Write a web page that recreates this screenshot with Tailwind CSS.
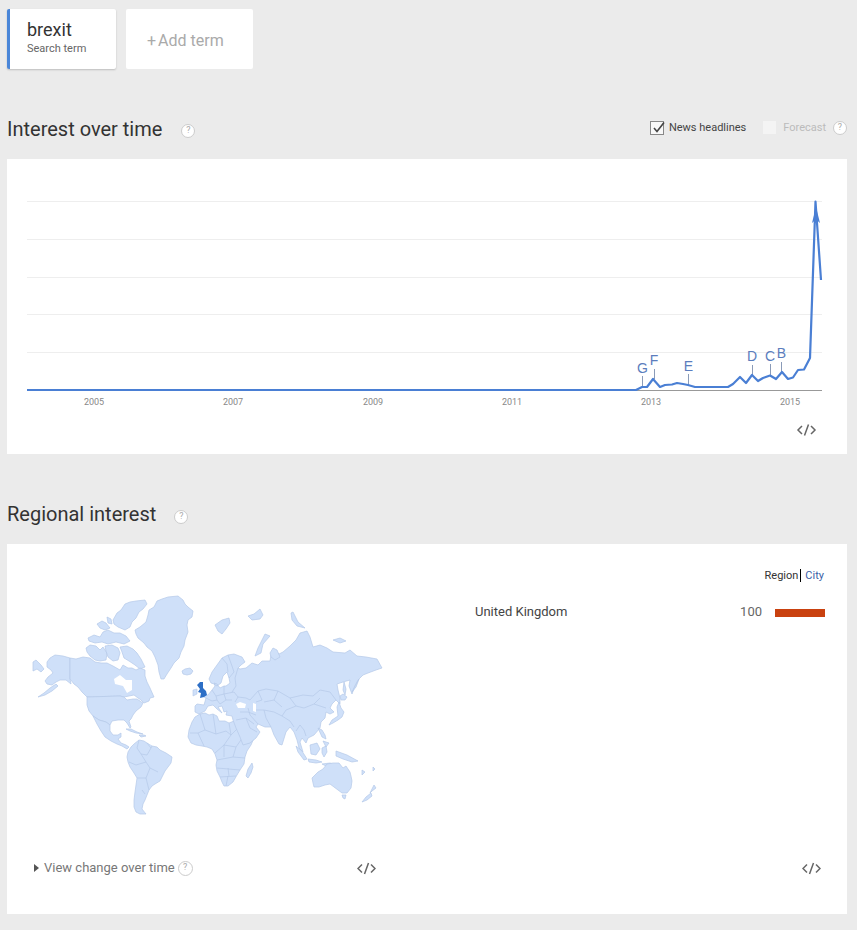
<!DOCTYPE html>
<html><head><meta charset="utf-8"><script src="https://cdn.jsdelivr.net/npm/@tailwindcss/browser@4"></script></head>
<body class="bg-[#ebebeb] font-['Roboto',sans-serif] text-[#333] w-[857px] h-[930px] overflow-hidden">
<div class="px-[7px] pt-[9px] flex gap-[10px]">
  <div class="w-[109px] h-[60px] bg-white rounded-[2px] border-l-[3px] border-[#4a86d8] shadow-[0_1px_2px_rgba(0,0,0,0.2)] pl-[17px] pt-[10px]">
    <div class="text-[18px] leading-[21px] text-[#333]">brexit</div>
    <div class="text-[11px] leading-[15px] text-[#666] mt-[1px]">Search term</div>
  </div>
  <div class="w-[127px] h-[60px] bg-white rounded-[2px] flex items-center pl-[21px] pt-[3px] text-[16px] text-[#aaa]">+<span class="ml-[2px]">Add term</span></div>
</div>
<div class="h-[90px] pl-[7px] pr-[10px] flex items-end pb-[18px] justify-between relative">
  <div class="flex items-center">
    <span class="text-[20px] leading-[24px] text-[#333]">Interest over time</span>
    <span class="ml-[19px] mt-[4px] w-[14px] h-[14px] rounded-full border border-[#ccc] bg-white text-[#aaa] text-[9px] flex items-center justify-center">?</span>
  </div>
  <div class="flex items-center mb-[5px] text-[11px]">
    <span class="w-[14px] h-[14px] border border-[#888] bg-[#f8f8f8] relative"><svg class="absolute left-0 -top-[2px]" width="15" height="15" viewBox="0 0 15 15"><path d="M3 8l3 3.500l7-9" fill="none" stroke="#444" stroke-width="1.600"/></svg></span>
    <span class="ml-[5px] text-[#444]">News headlines</span>
    <span class="ml-[17px] w-[13px] h-[13px] bg-[#f4f4f4]"></span>
    <span class="ml-[7px] text-[#bbb]">Forecast</span>
    <span class="ml-[7px] w-[14px] h-[14px] rounded-full border border-[#ccc] bg-white text-[#aaa] text-[9px] flex items-center justify-center">?</span>
  </div>
</div>
<section class="ml-[7px] w-[840px] h-[295px] bg-white">
  <svg width="840" height="295" viewBox="7 159 840 295" class="block">
    <g stroke="#eeeeee" stroke-width="1">
      <path d="M27 201.500H822M27 239.500H822M27 277.500H822M27 314.500H822M27 352.500H822"/>
    </g>
    <path d="M27 390.500H822" stroke="#999" stroke-width="1"/>
    <g stroke="#8a9bb8" stroke-width="1" fill="none">
      <path d="M642.500 376V387M654.500 369V379M688.500 374V385M752.500 365V375M770.500 364V375M781.500 362V372"/>
    </g>
    <path d="M27 390H636L642 387H647L653 379L660 387L665 385L672 384.500L677 383L683 384L688 385L695 387H728L733 384L740 377L746 383L752 375L758 381L763 378L770 375.500L776 379L782 372L788 379L793 377.500L798 370L804 369.500L810 358L815.500 201.500L821 280" fill="none" stroke="#4a7fd4" stroke-width="2.200" stroke-linejoin="round"/>
    <path d="M816 207L812 223L816 219.500L820 223Z" fill="#4a7fd4"/>
    <g font-family="'Liberation Sans',sans-serif" font-size="14" fill="#5b7dbd" text-anchor="middle">
      <text x="642.500" y="373">G</text><text x="654" y="365">F</text><text x="688.500" y="371">E</text><text x="752" y="361">D</text><text x="770" y="361">C</text><text x="781.500" y="358">B</text>
    </g>
    <g font-family="Roboto,sans-serif" font-size="9" fill="#888" text-anchor="middle">
      <text x="94" y="405">2005</text><text x="233" y="405">2007</text><text x="373" y="405">2009</text><text x="512" y="405">2011</text><text x="651" y="405">2013</text><text x="790" y="405">2015</text>
    </g>
    <path d="M802 426l-4 4l4 4M811 426l4 4l-4 4M808.500 424.500l-4 11" fill="none" stroke="#666" stroke-width="1.500"/>
  </svg>
</section>
<div class="h-[90px] px-[7px] flex items-end pb-[18px]">
  <span class="text-[20px] leading-[24px] text-[#333]">Regional interest</span>
  <span class="ml-[18px] mb-[2px] w-[14px] h-[14px] rounded-full border border-[#ccc] bg-white text-[#aaa] text-[9px] flex items-center justify-center">?</span>
</div>
<section class="ml-[7px] w-[840px] h-[370px] bg-white flex">
  <div class="w-[384px] flex flex-col shrink-0">
    <svg width="384" height="250" viewBox="7 590 384 250" class="block mt-[46px] blur-[0.3px]">
      <g fill="#cfe0f9" stroke="#b4c8e8" stroke-width="0.700" stroke-linejoin="round">
        <!-- Greenland -->
        <path d="M135 630L140 627L146 622L148 615L149 610L154 607L157 601L162 599L168 597L178 596L183 600L185 604L188 607L193 611L192 617L188 620L187 625L188 632L185 640L184 646L181 652L179 658L174 663L171 668L167 674L164 679L161 679L159 672L158 665L155 657L152 651L147 647L144 643L138 638L136 634Z"/>
        <!-- Arctic archipelago -->
        <path d="M113 620L117 613L121 610L125 604L130 602L136 601L145 600L147 604L143 609L139 612L136 618L132 622L130 627L125 630L118 627L114 624Z"/>
        <path d="M88 638L94 635L100 637L103 632L108 630L114 633L120 633L126 636L130 641L124 644L116 642L108 644L102 642L95 643L89 641Z"/>
        <path d="M97 624L102 621L106 623L110 628L105 630L100 628Z"/>
        <path d="M107 617L111 619L112 624L108 623Z"/>
        <path d="M86 648L90 645L96 646L100 650L103 647L107 653L106 660L100 661L95 660L90 656L87 652Z"/>
        <path d="M105 646L112 645L118 648L120 653L118 660L113 661L108 657L106 651Z"/>
        <path d="M120 647L127 646L133 649L137 653L141 659L145 667L140 669L135 665L129 661L124 658L122 652Z"/>
        <!-- Iceland -->
        <path d="M182 671L185 669L190 668L193 671L191 674L187 675L183 674Z"/>
        <!-- Alaska -->
        <path d="M70 658L63 656L55 655L50 658L47 662L47 667L51 670L53 673L48 677L45 681L47 684L52 685L56 682L60 680L66 680L71 684L70 679Z"/>
        <path d="M33 662L36 660L41 665L44 669L41 672L37 669L33 671Z"/>
        <path d="M56 684L50 688L44 693L38 697L45 695L52 691L58 686Z"/>
        <!-- Canada -->
        <path d="M70 658L76 659L83 657L90 658L95 662L101 663L107 663L113 666L120 670L123 665L128 668L132 668L136 670L140 668L145 670L145 676L147 682L150 688L154 697L150 698L149 701L144 703L141 700L138 698L134 695L129 696L124 697L120 696L87 697L82 692L78 687L74 684L70 679Z"/>
        <!-- USA -->
        <path d="M87 697L120 696L124 697L127 700L133 699L137 699L143 703L141 707L136 711L133 715L131 719L129 721L131 727L130 728L127 723L124 720L118 720L112 721L110 725L106 722L99 720L93 716L89 711L87 705Z"/>
        <!-- Mexico + central america -->
        <path d="M93 716L99 720L106 722L110 725L110 731L113 735L118 735L121 733L121 737L118 739L121 743L126 745L129 747L127 749L122 746L117 744L111 741L105 737L101 731L97 724Z"/>
        <path d="M126 729L131 729L137 732L143 734L136 733L130 731Z"/>
        <path d="M139 735L144 735L146 736L141 737Z"/>
        <!-- South America -->
        <path d="M128 752L131 747L134 744L139 740L144 741L147 743L152 746L157 747L160 750L166 753L172 757L171 763L168 767L165 771L162 777L160 781L155 784L152 786L149 790L147 795L145 800L143 804L142 809L146 814L140 814L136 812L134 807L134 800L135 792L136 785L137 778L134 773L130 767L128 762L127 757Z"/>
        <path d="M139 740L137 748L141 754L147 755L151 748M147 743L151 748L152 746M141 754L146 762L150 768L158 772M129 762L136 765L146 762M137 778L146 778L149 790M146 778L150 768M142 790L145 794"/>
        <!-- Africa -->
        <path d="M192 722L195 717L200 714L205 713L209 715L213 714L217 716L219 721L225 721L229 723L234 721L236 724L240 731L243 737L249 738L254 738L251 745L247 751L245 757L244 764L240 770L237 775L233 782L228 786L224 786L222 782L220 777L217 771L216 765L217 760L215 754L212 749L207 747L202 746L196 745L191 743L188 737L189 730Z"/>
        <path d="M200 714L205 730L198 733L190 733M198 733L204 746M213 714L216 734L205 730M216 734L226 731L231 735L229 723M231 735L237 729M231 735L224 745L215 753M224 745L236 747L243 737M236 747L233 757L217 760M233 757L245 758M224 745L224 757M217 768L240 770M220 777L236 776M226 786L228 776M228 768L229 776"/>
        <path d="M246 776L248 769L252 763L253 767L251 773L248 778Z"/>
        <!-- Eurasia -->
        <path d="M195 712L195 706L197 704L204 705L206 698L202 696L208 695L212 690L215 686L214 683L217 684L220 688L224 686L226 686L230 683L229 678L227 672L223 676L221 683L217 686L214 684L211 683L209 679L212 672L217 665L222 658L228 655L234 654L242 657L245 662L241 665L238 668L240 669L246 668L252 663L258 665L262 661L270 661L271 655L273 651L279 654L283 652L290 646L296 640L300 633L307 631L310 637L313 647L320 645L327 648L333 652L345 653L350 650L357 656L366 657L377 659L382 668L376 670L368 673L363 675L358 680L355 686L352 694L349 686L350 680L343 682L337 684L338 690L340 698L340 704L336 700L332 704L330 708L334 712L330 714L326 712L325 718L321 722L320 728L314 735L308 738L306 743L302 738L300 742L303 752L299 748L297 740L294 732L290 727L286 732L282 745L279 744L274 735L271 727L265 727L258 724L256 727L260 732L256 738L250 743L243 745L240 737L236 728L233 720L232 716L226 715L227 711L224 712L222 706L218 707L222 713L217 709L213 705L208 706L205 711L199 714Z"/>
        <!-- borders -->
        <path fill="none" d="M206 698L212 701L217 700L220 704M212 690L216 696L217 700M216 696L224 694L226 700L220 704M224 686L224 694L234 692L238 697L235 702M226 700L232 700M232 692L236 686L235 678L238 668M222 658L227 664L228 672M228 655L232 666L234 672L229 678M238 697L246 698L250 700L258 691L266 689L278 691L290 698L303 695L313 696L320 690L330 692L336 700M290 698L296 706L304 708L314 704L320 698M314 704L326 708M296 706L286 710L282 716L274 712L264 710L256 710M264 710L266 718L271 727M282 716L290 721L294 727M248 708L250 715L258 724M240 712L248 712L256 715M236 720L246 718L254 724M246 718L250 728L257 732M300 725L304 730L306 736M300 725L296 731M258 691L262 700L256 702M278 691L274 700L264 702M274 700L282 707"/>
        <!-- Japan & NE islands -->
        <path d="M337 707L339 702L341 708L344 712L342 717L338 720L333 723L329 725L332 720L338 716Z"/>
        <path d="M340 696L343 694L347 697L345 700L341 700Z"/>
        <path d="M344 682L346 689L345 695L343 690Z"/>
        <path d="M359 679L356 687L352 692L355 686Z"/>
        <!-- Indonesia -->
        <path d="M296 746L302 751L307 759L304 760L298 752Z"/>
        <path d="M308 759L316 760L322 762L316 763L309 762Z"/>
        <path d="M310 745L317 743L320 749L316 755L311 754Z"/>
        <path d="M322 748L326 746L327 752L324 757L322 753Z"/>
        <path d="M336 751L347 755L358 761L352 762L343 759L336 756Z"/>
        <path d="M322 764L330 763L335 765L326 766Z"/>
        <path d="M318 728L322 730L325 735L326 739L322 737Z"/><path d="M323 741L329 743L326 747Z"/>
        <!-- Australia -->
        <path d="M312 778L318 772L323 769L327 764L333 763L339 763L343 768L346 766L350 772L351 776L352 781L351 788L347 793L342 793L338 790L334 787L330 784L325 785L319 787L314 787L313 783Z"/>
        <path d="M342 795L346 795L345 799L343 798Z"/>
        <!-- NZ -->
        <path d="M374 785L376 788L372 791L370 793Z"/><path d="M371 793L366 797L362 802L367 800L372 796Z"/>
        <path d="M362 770L365 772L362 775Z"/><path d="M373 767L375 769L373 771Z"/>
        <!-- Arctic Eurasia -->
        <path d="M215 625L222 620L229 618L230 623L226 629L222 634L218 631Z"/>
        <path d="M248 616L254 614L260 609L263 615L260 619L252 620Z"/>
        <path d="M291 613L293 612L298 622L305 628L297 626L292 620Z"/>
        <path d="M255 656L258 648L265 634L270 636L263 644L261 653Z"/>
        <path d="M270 653L273 648L277 650L280 657L275 660L271 657Z"/>
        <path d="M333 640L340 638L346 641L340 643Z"/>
      </g>
      <!-- Hudson bay, seas -->
      <path d="M114 679L120 675L126 680L132 680L132 690L127 693L123 686L115 684Z" fill="#fff"/>
      <path d="M236 704L240 702L246 704L245 708L238 708Z" fill="#fff"/>
      <path d="M253 703L256 704L256 712L253 711Z" fill="#fff"/>
      <path d="M193 690L197 689L197 694L193 696Z" fill="#cfe0f9" stroke="#b4c8e8" stroke-width="0.600"/>
      <path d="M197 685L200 682L203 682L203 688L206 691L207 695L204 697L200 698L201 693L198 692L200 689Z" fill="#2d6fc6"/>
    </svg>
    <div class="h-[36px] mt-[10px] flex items-center text-[12px] text-[#777] pl-[27px] relative">
      <svg width="5" height="8" viewBox="0 0 5 8"><path d="M0 0L5 4L0 8Z" fill="#555"/></svg>
      <span class="ml-[5px] text-[13px]">View change over time</span>
      <span class="ml-[3px] w-[15px] h-[15px] rounded-full border border-[#ccc] bg-white text-[#aaa] text-[9px] flex items-center justify-center">?</span>
      <svg class="ml-[164px]" width="19" height="13" viewBox="0 0 19 13"><path d="M5 2.500l-4 4l4 4M14 2.500l4 4l-4 4M11.500 1l-4 11" fill="none" stroke="#666" stroke-width="1.500"/></svg>
    </div>
  </div>
  <div class="flex-1 flex flex-col pr-[22px] pl-[84px] relative">
    <div class="flex justify-end mt-[25px] text-[11px] leading-[13px] mr-[1px]"><span class="text-[#333] border-r border-black pr-[2px]">Region</span><span class="text-[#3b5fa8] pl-[4px]">City</span></div>
    <div class="flex items-center mt-[22px] h-[16px]">
      <span class="text-[13px] text-[#444]">United Kingdom</span>
      <span class="ml-auto text-[13px] text-[#666]">100</span>
      <span class="ml-[13px] w-[50px] h-[8px] bg-[#c9410f] mt-[2px]"></span>
    </div>
    <div class="flex-1"></div>
    <div class="flex justify-end mb-[39px] mr-[4px]">
      <svg width="19" height="13" viewBox="0 0 19 13"><path d="M5 2.500l-4 4l4 4M14 2.500l4 4l-4 4M11.500 1l-4 11" fill="none" stroke="#666" stroke-width="1.500"/></svg>
    </div>
  </div>
</section>
</body></html>
